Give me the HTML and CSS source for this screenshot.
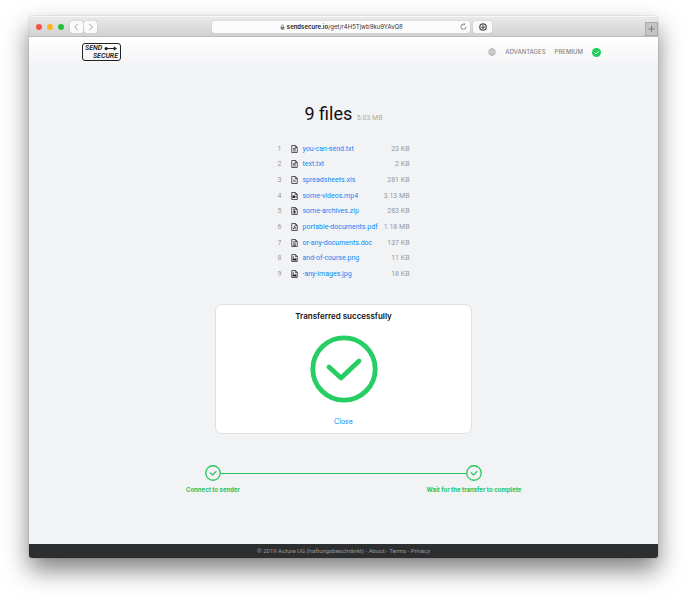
FILE: index.html
```html
<!DOCTYPE html>
<html lang="en">
<head>
<meta charset="utf-8">
<title>Send Secure</title>
<link rel="stylesheet" href="styles.css">
</head>
<body>
<svg class="defs" aria-hidden="true">
  <symbol id="file" viewBox="0 0 14 16"><path d="M1.500 1h7.500L12.500 4.500V15h-11zM8.500 1v4h4" fill="none" stroke="#333" stroke-width="1.600"/></symbol>
  <symbol id="step" viewBox="0 0 32 32"><circle cx="16" cy="16" r="14.500" fill="none" stroke="currentColor" stroke-width="2.600"/><path d="m10.500 15.500 4.500 4.500 7-7" fill="none" stroke="currentColor" stroke-width="2.200" stroke-linecap="round" stroke-linejoin="round"/></symbol>
</svg>
<div class="window">
  <div class="toolbar">
    <div class="controls">
      <span class="light red"></span><span class="light yellow"></span><span class="light green"></span>
      <div class="history">
        <button class="tool" aria-label="Back"><svg viewBox="0 0 14 12"><path d="M8.500 2.500 5 6l3.500 3.500"/></svg></button>
        <button class="tool" aria-label="Forward"><svg viewBox="0 0 14 12"><path d="M5.500 2.500 9 6 5.500 9.500"/></svg></button>
      </div>
    </div>
    <div class="address">
      <svg class="lock" viewBox="0 0 8 10"><path d="M1 4.500h6V9H1z" fill="#777"/><path d="M2.200 5V3a1.800 1.800 0 0 1 3.600 0v2" fill="none" stroke="#777"/></svg>
      <span><b>sendsecure.io</b>/get/r4H5Tjwb9ku9YAvQ8</span>
      <button class="reload" aria-label="Reload"><svg viewBox="0 0 12 12"><path d="M10.500 6.500A4.500 4.500 0 1 1 6 2h2M6.200 0 8.300 2 6.200 4" fill="none" stroke="#666" stroke-width="1.300"/></svg></button>
    </div>
    <div class="extras">
      <button class="tool downloads" aria-label="Downloads"><svg viewBox="0 0 12 12"><circle cx="6" cy="6" r="4.800" fill="none" stroke="#555" stroke-width="2"/><path d="M6 2.500v5M3.800 5.800 6 8l2.200-2.200" fill="none" stroke="#555" stroke-width="1.700"/></svg></button>
      <button class="newtab" aria-label="New tab"><svg viewBox="0 0 12 12"><path d="M6 2.500v7M2.500 6h7" stroke="#777"/></svg></button>
    </div>
  </div>
  <header class="header">
    <a class="logo" href="#"><span class="send">SEND<svg viewBox="0 0 24 8"><path d="M4 4h16" stroke="#222" stroke-width="2"/><circle cx="4" cy="4" r="3" fill="#222"/><path d="m18 0 6 4-6 4z" fill="#222"/></svg></span><span class="secure">SECURE</span></a>
    <nav class="nav">
      <a href="#" aria-label="Language"><svg class="globe" viewBox="0 0 16 16"><circle cx="8" cy="8" r="7"/><ellipse cx="8" cy="8" rx="3.500" ry="7"/><path d="M8 1v14M1 8h14M2 4.500h12M2 11.500h12"/></svg></a>
      <a href="#">ADVANTAGES</a>
      <a href="#">PREMIUM</a>
      <svg class="status" viewBox="0 0 18 18"><circle cx="9" cy="9" r="9" fill="#20ce5c"/><path d="m5 9 3 3 5.500-5.500" fill="none" stroke="#fff" stroke-width="2"/></svg>
    </nav>
  </header>
  <main class="main">
    <h1 class="heading">9 files <small>5.03 MB</small></h1>
    <table class="files">
      <tr><td class="num">1</td><td class="icon"><svg viewBox="0 0 14 16"><use href="#file"/><path class="fine" d="M4 7h5.500M4 9.500h5.500M4 12h5.500"/></svg></td><td class="name"><a href="#">you-can-send.txt</a></td><td class="size">23 KB</td></tr>
      <tr><td class="num">2</td><td class="icon"><svg viewBox="0 0 14 16"><use href="#file"/><path class="fine" d="M4 7h5.500M4 9.500h5.500M4 12h5.500"/></svg></td><td class="name"><a href="#">text.txt</a></td><td class="size">2 KB</td></tr>
      <tr><td class="num">3</td><td class="icon"><svg viewBox="0 0 14 16"><use href="#file"/><path class="fine" d="m4.500 7 5 5.500M9.500 7l-5 5.500"/></svg></td><td class="name"><a href="#">spreadsheets.xls</a></td><td class="size">281 KB</td></tr>
      <tr><td class="num">4</td><td class="icon"><svg viewBox="0 0 14 16"><use href="#file"/><path class="solid" d="M3 7h5v5H3zM8 9.500 11 7v5z"/></svg></td><td class="name"><a href="#">some-videos.mp4</a></td><td class="size">3.13 MB</td></tr>
      <tr><td class="num">5</td><td class="icon"><svg viewBox="0 0 14 16"><use href="#file"/><path class="solid" d="M5 3h2v5h2v5H5z"/></svg></td><td class="name"><a href="#">some-archives.zip</a></td><td class="size">283 KB</td></tr>
      <tr><td class="num">6</td><td class="icon"><svg viewBox="0 0 14 16"><use href="#file"/><path class="fine" d="M4 12c3-1 3-4 2.500-6 1 3 2 4 4 4-3-.5-5 .5-6.500 2"/></svg></td><td class="name"><a href="#">portable-documents.pdf</a></td><td class="size">1.18 MB</td></tr>
      <tr><td class="num">7</td><td class="icon"><svg viewBox="0 0 14 16"><use href="#file"/><path class="fine" d="M4 5.500h3M4 8h6M4 10.500h6M4 13h6"/></svg></td><td class="name"><a href="#">or-any-documents.doc</a></td><td class="size">137 KB</td></tr>
      <tr><td class="num">8</td><td class="icon"><svg viewBox="0 0 14 16"><use href="#file"/><path class="solid" d="m3 13 0-3 2-2 2 2 2-2 2 2v3zM3 5h2.500v2.500H3z"/></svg></td><td class="name"><a href="#">and-of-course.png</a></td><td class="size">11 KB</td></tr>
      <tr><td class="num">9</td><td class="icon"><svg viewBox="0 0 14 16"><use href="#file"/><path class="solid" d="m3 13 0-3 2-2 2 2 2-2 2 2v3zM3 5h2.500v2.500H3z"/></svg></td><td class="name"><a href="#">-any-images.jpg</a></td><td class="size">18 KB</td></tr>
    </table>
    <section class="card">
      <h2>Transferred successfully</h2>
      <svg class="done" viewBox="0 0 68 68" fill="none" stroke="currentColor" stroke-width="4.800" stroke-linecap="round" stroke-linejoin="round"><circle cx="34" cy="34" r="31.200"/><path d="M19 32 31 43 49 26"/></svg>
      <button class="close">Close</button>
    </section>
    <ol class="steps">
      <li><svg><use href="#step"/></svg>Connect to sender</li>
      <li><svg><use href="#step"/></svg>Wait for the transfer to complete</li>
    </ol>
  </main>
  <footer class="footer">© 2019 Acture UG (haftungsbeschränkt) - <a href="#">About</a> - <a href="#">Terms</a> - <a href="#">Privacy</a></footer>
</div>
</body>
</html>
```
FILE: styles.css
```css
* { box-sizing: border-box; }
body {
  margin: 0;
  padding: 16px 29px 42px;
  background: #fff;
  font: 7px/12px Inter, "Liberation Sans", sans-serif;
}
a { color: inherit; text-decoration: none; }
button { padding: 0; border: 0; background: none; font: inherit; }
svg { display: block; }
.defs { position: absolute; width: 0; height: 0; }

.window {
  display: flex;
  flex-direction: column;
  min-height: calc(100vh - 58px);
  border-radius: 3px;
  overflow: hidden;
  background: #f2f3f5;
  box-shadow: 0 0 1px rgba(0, 0, 0, .5), 0 12px 24px rgba(0, 0, 0, .5);
}

/* Browser toolbar */
.toolbar {
  display: grid;
  grid-template-columns: 29% 41% 30%;
  align-items: center;
  height: 21px;
  background: linear-gradient(#e9e9ea, #d2d2d4);
  border-top: 1px solid #f8f8f8;
  border-bottom: 1px solid #bbb;
}
.controls { display: flex; align-items: center; gap: 4px; padding-left: 7px; }
.light { width: 6px; height: 6px; border-radius: 50%; }
.light + .light { margin-left: 1px; }
.red { background: #fb5048; }
.yellow { background: #fdb424; }
.green { background: #24c138; }
.history { display: flex; gap: 1px; margin-left: 2px; }
.tool { border-radius: 2px; background: #fafafa; box-shadow: 0 0 1px #999; }
.history svg { width: 13px; height: 12px; fill: none; stroke: #999; }
.address {
  display: flex;
  align-items: center;
  justify-content: center;
  gap: 2px;
  position: relative;
  height: 12px;
  margin: 0 -1px 0 1px;
  border-radius: 2px;
  background: #fcfcfc;
  box-shadow: 0 0 1px #999;
  color: #333;
  font-size: 6px;
}
.address b { color: #222; font-weight: 600; }
.lock { width: 5px; height: 6px; }
.reload { position: absolute; right: 3px; }
.reload svg { width: 7px; height: 7px; }
.extras { display: flex; align-items: center; justify-content: space-between; padding-left: 4px; }
.downloads { width: 19px; height: 12px; }
.downloads svg { width: 8px; height: 8px; margin: auto; }
.newtab { align-self: flex-end; margin-bottom: -3px; border: 1px solid #aaa; background: #c4c4c6; }
.newtab svg { width: 11px; height: 12px; }

/* Site header */
.header {
  display: flex;
  align-items: center;
  justify-content: space-between;
  padding: 6px 57px 7px 53px;
  background: linear-gradient(#fff, #f2f3f5);
}
.logo {
  display: flex;
  flex-direction: column;
  padding: 0 2px;
  width: 39px;
  border: 1px solid #222;
  border-radius: 3px;
  color: #222;
  font: italic 600 7px/8px Roboto, sans-serif;
}
.send { display: flex; align-items: center; gap: 2px; }
.send svg { width: 13px; height: 5px; }
.secure { text-align: right; }
.nav { display: flex; align-items: center; gap: 9px; color: #888; font-size: 6px; font-weight: 500; }
.globe { width: 8px; height: 8px; fill: none; stroke: #999; }
.status { width: 9px; height: 9px; }

/* Transfer */
.main { display: flex; flex: 1; flex-direction: column; align-items: center; }
.heading {
  margin: 34px 0 11px;
  color: #111;
  font: 400 18px/24px Roboto, sans-serif;
}
.heading small { color: #aaa; font-size: 7px; }
.files {
  width: 132px;
  height: 141px;
  border-collapse: collapse;
  line-height: 12px;
  font-family: Roboto, sans-serif;
}
.files td { padding: 0; }
.num { width: 13px; color: #999; }
.icon { width: 12px; }
.icon svg { width: 7px; height: 8px; }
.fine { fill: none; stroke: #333; stroke-width: 1.4; }
.solid { fill: #222; }
.name { color: #1089f5; white-space: nowrap; }
.size { color: #999; text-align: right; white-space: nowrap; }

.card {
  display: flex;
  flex-direction: column;
  align-items: center;
  width: 41%;
  margin-top: 22px;
  padding: 5px 0;
  border: 1px solid #e0e1e3;
  border-radius: 7px;
  background: #fff;
}
.card h2 { margin: 0; color: #111; font-size: 8px; font-weight: 600; line-height: 12px; }
.done { width: 68px; height: 68px; margin: 13px 0; color: #26cd63; }
.close { color: #1089f5; line-height: 12px; }

.steps {
  display: flex;
  width: 83%;
  margin: 31px 0;
  padding: 0;
  list-style: none;
  color: #25c45f;
  font-size: 6px;
  font-weight: 700;
}
.steps li {
  display: flex;
  flex: 1;
  flex-direction: column;
  align-items: center;
  gap: 3px;
  position: relative;
}
.steps svg { width: 16px; height: 16px; }
.steps li:first-child::after {
  content: "";
  position: absolute;
  top: 8px;
  left: calc(50% + 8px);
  width: calc(100% - 16px);
  height: 1px;
  background: #25c45f;
}
.footer {
  background: #2c2e30;
  color: #999;
  font: 6px/14px Roboto, sans-serif;
  text-align: center;
}
```
